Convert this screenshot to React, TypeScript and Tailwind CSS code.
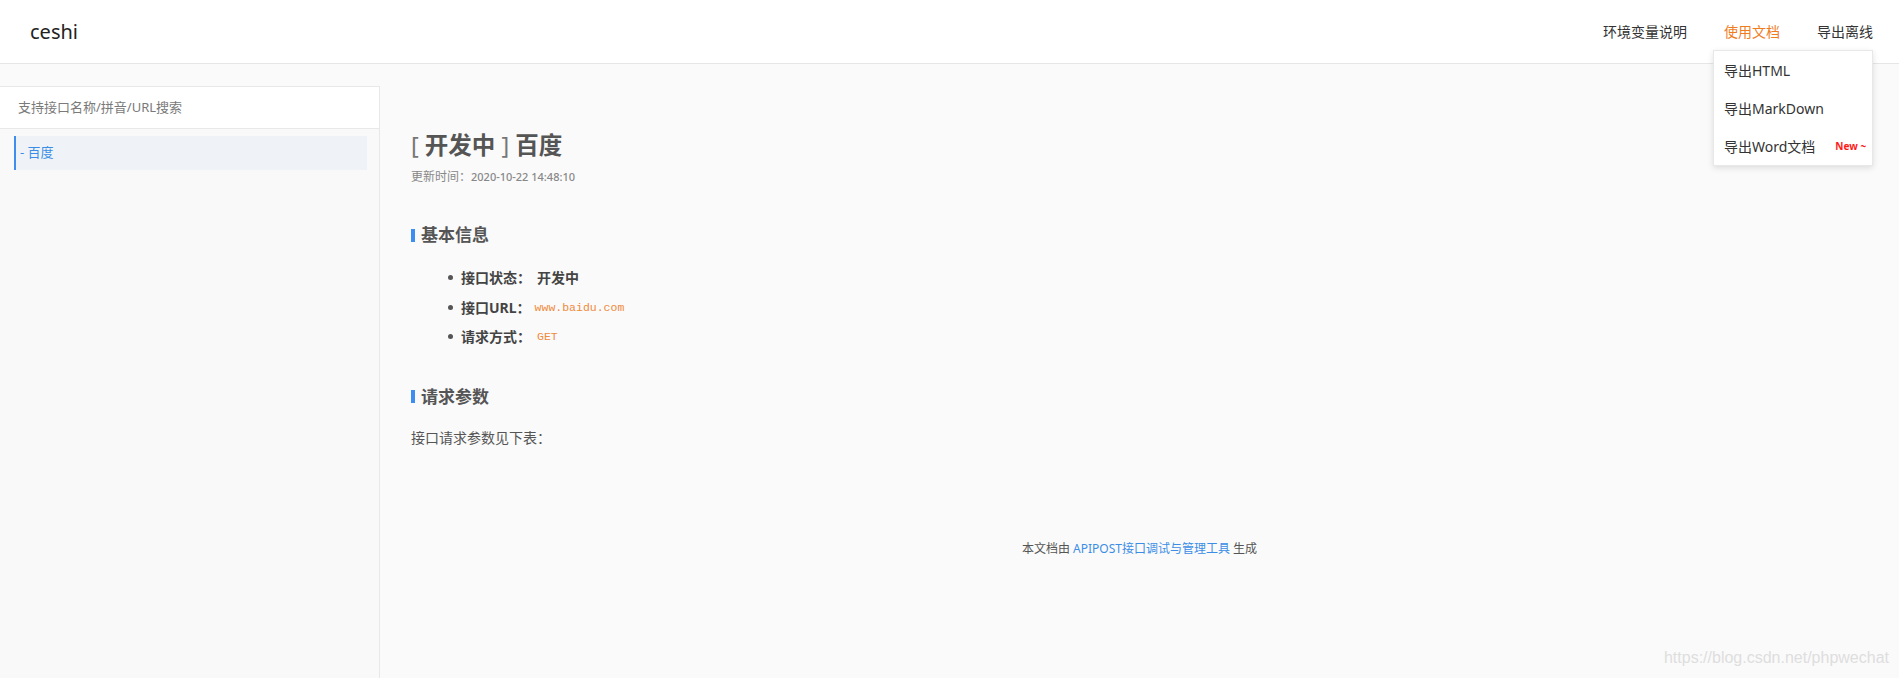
import React from "react";

const font = { fontFamily: '"Noto Sans", "Noto Sans CJK SC", sans-serif' };

function Heading({ children }: { children: React.ReactNode }) {
  return (
    <div className="flex items-center h-[24px]">
      <span className="w-[4px] h-[13px] bg-[#3d8ef0] mr-[6px]" />
      <span className="text-[17px] font-bold text-[#555]">{children}</span>
    </div>
  );
}

function Item({ label, children }: { label: string; children: React.ReactNode }) {
  return (
    <li className="flex items-center h-[29.5px]">
      <span className="w-[5px] h-[5px] rounded-full bg-[#555] ml-[37px] mr-[8px]" />
      <span className="text-[14px] font-bold text-[#444]">{label}</span>
      {children}
    </li>
  );
}

export default function App() {
  return (
    <div className="relative w-full h-[678px] bg-[#fafafa] flex flex-col overflow-hidden" style={font}>
      <header className="h-[64px] shrink-0 bg-white border-b border-[#e6e6e6] flex items-center justify-between pl-[30px] pr-[26px]">
        <div className="text-[20px] text-[#222]">ceshi</div>
        <nav className="flex items-center gap-[37px] text-[14px] text-[#333]">
          <span>环境变量说明</span>
          <span className="text-[#f07c1e]">使用文档</span>
          <span>导出离线</span>
        </nav>
      </header>
      <div className="flex flex-1 min-h-0">
        <aside className="w-[380px] shrink-0 mt-[22px] border-t border-r border-[#e8e8e8] bg-[#f9f9f9]">
          <div className="h-[42px] bg-white border-b border-[#e8e8e8] flex items-center pl-[18px] text-[13px] text-[#7a7a7a]">
            支持接口名称/拼音/URL搜索
          </div>
          <div className="mt-[7px] ml-[14px] mr-[12px] h-[34px] bg-[#eff3f8] border-l-2 border-[#3d8ef0] flex items-center pl-[4px] text-[13px] text-[#3a8ee6]">
            - 百度
          </div>
        </aside>
        <main className="flex-1 pl-[31px] pt-[65px]">
          <h1 className="text-[23.5px] leading-[32px] text-[#555] font-bold">
            <span className="font-normal text-[#777]">[</span> 开发中 <span className="font-normal text-[#777]">]</span> 百度
          </h1>
          <div className="mt-[7px] text-[12px] leading-[18px] text-[#888]">
            更新时间：<span className="text-[11px] font-medium">2020-10-22 14:48:10</span>
          </div>
          <div className="mt-[37px]">
            <Heading>基本信息</Heading>
          </div>
          <ul className="mt-[16px]">
            <Item label="接口状态：">
              <span className="ml-[6px] text-[14px] font-bold text-[#444]">开发中</span>
            </Item>
            <Item label="接口URL：">
              <span className="ml-[4px] text-[11.5px] text-[#f08a3d]" style={{ fontFamily: '"Liberation Mono", monospace' }}>www.baidu.com</span>
            </Item>
            <Item label="请求方式：">
              <span className="ml-[6px] text-[11.5px] text-[#f08a3d]" style={{ fontFamily: '"Liberation Mono", monospace' }}>GET</span>
            </Item>
          </ul>
          <div className="mt-[33px]">
            <Heading>请求参数</Heading>
          </div>
          <p className="mt-[18px] text-[14px] leading-[22px] text-[#555]">接口请求参数见下表：</p>
          <div className="mt-[91px] pr-[31px] text-center text-[12px] leading-[18px] text-[#555]">
            本文档由 <span className="text-[#3a8ee6]">APIPOST接口调试与管理工具</span> 生成
          </div>
        </main>
      </div>
      <div className="absolute left-[1713px] top-[50px] w-[160px] h-[116px] bg-white border border-[#e8e8e8] shadow-[0_2px_6px_rgba(0,0,0,0.12)] text-[14px] text-[#333]">
        <div className="h-[38px] flex items-center pl-[10px]">导出HTML</div>
        <div className="h-[38px] flex items-center pl-[10px]">导出MarkDown</div>
        <div className="h-[38px] flex items-center pl-[10px]">
          导出Word文档
          <span className="ml-[20px] text-[10px] font-bold text-[#ff1a1a]">New ~</span>
        </div>
      </div>
      <div className="absolute right-[10px] bottom-[8px] text-[16px] text-[#dedede]" style={{ fontFamily: '"Liberation Sans", sans-serif' }}>
        https://blog.csdn.net/phpwechat
      </div>
    </div>
  );
}
